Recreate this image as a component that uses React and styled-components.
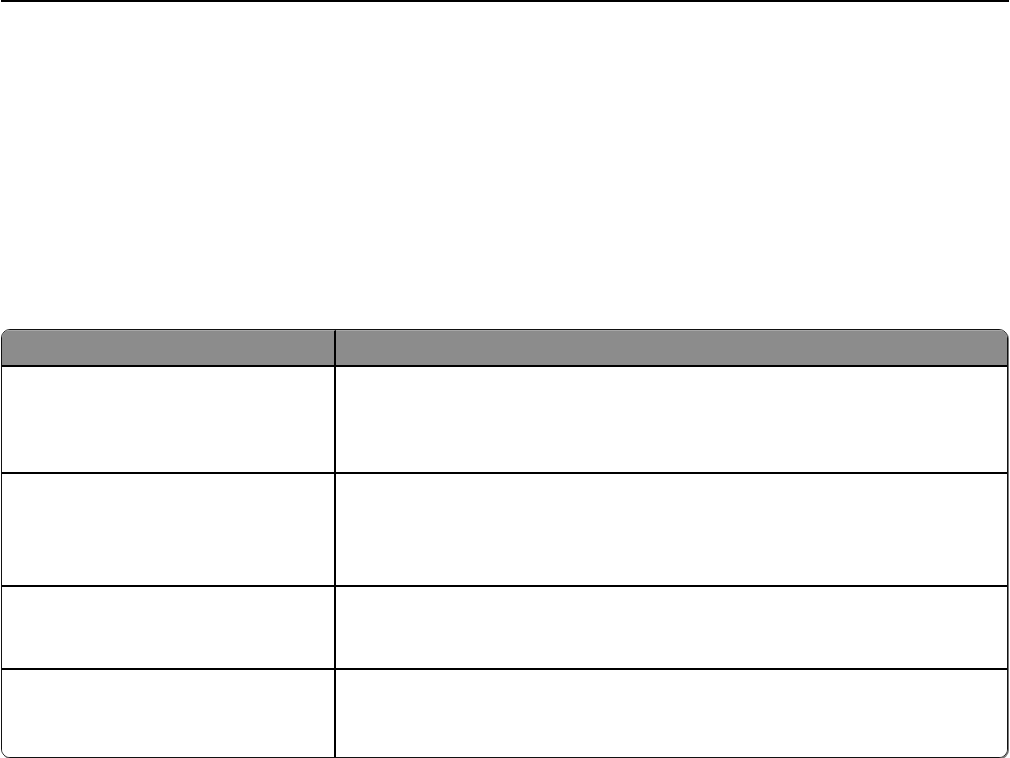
import { Fragment } from 'react';
import styled, { createGlobalStyle } from 'styled-components';

const GlobalStyle = createGlobalStyle`
	html, body {
		margin: 0;
		padding: 0;
		background: #ffffff;
		font-family: 'Liberation Sans', Arial, sans-serif;
	}
`;

const Page = styled.main`
	width: 1010px;
	height: 758px;
	display: flex;
	flex-direction: column;
	overflow: hidden;
`;

const TopRule = styled.div`
	height: 2px;
	margin: 0 1px 0 1px;
	background: #000;
`;

const Blank = styled.div`
	height: 327px;
`;

const Table = styled.div`
	margin: 0 2px 0 1px;
	display: grid;
	grid-template-columns: 334px 1fr;
	border: 1.5px solid #111;
	border-radius: 9px;
	overflow: hidden;
	box-shadow: 1px 1px 0 #777;
`;

const HeadCell = styled.div`
	height: 34px;
	background: #8c8c8c;
	border-top: 1px solid #a8a8a8;
	border-bottom: 2px solid #000;
	border-right: ${({ $last }) => ($last ? 'none' : '2px solid #000')};
`;

const Cell = styled.div`
	height: ${({ $h }) => $h}px;
	background: #fff;
	border-bottom: ${({ $last }) => ($last ? 'none' : '2px solid #000')};
	border-right: ${({ $right }) => ($right ? 'none' : '2px solid #000')};
`;

// row heights taken from the picture
const rows = [105, 111, 81, 88];

const App = () => {
	return (
		<>
			<GlobalStyle />
			<Page>
				<TopRule />
				<Blank />
				<Table>
					<HeadCell />
					<HeadCell $last />
					{rows.map((h, i) => (
						<Fragment key={i}>
							<Cell $h={h} $last={i === rows.length - 1} />
							<Cell $h={h} $right $last={i === rows.length - 1} />
						</Fragment>
					))}
				</Table>
			</Page>
		</>
	);
};

export default App;
